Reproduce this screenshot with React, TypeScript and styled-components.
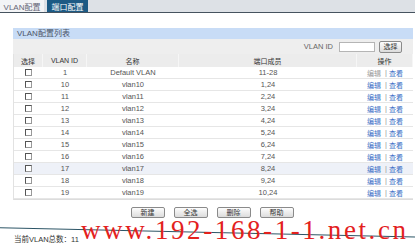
import React from 'react';
import styled, { createGlobalStyle } from 'styled-components';

const GlobalStyle = createGlobalStyle`
  html, body {
    margin: 0;
    padding: 0;
    background: #fff;
  }
  body {
    width: 415px;
    height: 248px;
    overflow: hidden;
    font-family: "Liberation Sans", "Noto Sans CJK SC", sans-serif;
    font-size: 8px;
    color: #555;
  }
`;

const Page = styled.div`
  position: relative;
  width: 415px;
  height: 248px;
  overflow: hidden;
`;

const TabBar = styled.div`
  display: flex;
  height: 12px;
  background: #dde1e6;
  border-bottom: 1px solid #46535f;
`;

const Tab = styled.div<{ $active?: boolean }>`
  display: flex;
  align-items: center;
  justify-content: center;
  width: ${({ $active }) => ($active ? 44 : 41)}px;
  margin-right: 3px;
  background: ${({ $active }) => ($active ? '#f3f4f6' : '#1c5a84')};
  color: ${({ $active }) => ($active ? '#667' : '#fff')};
  font-size: 8px;
`;

const Content = styled.div`
  padding: 15px 2px 0 13px;
`;

const PanelTitle = styled.div`
  height: 11px;
  line-height: 11px;
  padding-left: 4px;
  background: #c8dcf6;
  color: #4a5568;
`;

const FilterRow = styled.div`
  display: flex;
  align-items: center;
  justify-content: flex-end;
  height: 15px;
  padding-right: 11px;
  background: #eeeeee;
  color: #666;
`;

const FilterLabel = styled.span`
  margin-right: 6px;
  font-size: 7.5px;
`;

const TextBox = styled.div`
  box-sizing: border-box;
  width: 36px;
  height: 10px;
  border: 1px solid #b5b5b5;
  background: #fff;
  margin-right: 4px;
`;

const Button = styled.button<{ $w?: number; $h?: number }>`
  box-sizing: border-box;
  width: ${({ $w }) => $w ?? 34}px;
  height: ${({ $h }) => $h ?? 11}px;
  padding: 0;
  border: 1px solid #8a8a8a;
  border-radius: 2px;
  background: linear-gradient(#fdfdfd, #dcdcdc);
  font-family: "Noto Sans CJK SC", sans-serif;
  font-size: 7px;
  line-height: 1;
  color: #333;
`;

const Table = styled.div`
  display: grid;
  grid-template-columns: 29px 44px 92px 178px 1fr;
  border-left: 1px solid #e2e2e2;
  border-bottom: 1px solid #dcdcdc;
`;

const HeadCell = styled.div`
  display: flex;
  align-items: center;
  justify-content: center;
  height: 13px;
  background: #ececec;
  color: #333;
  font-family: "Noto Sans CJK SC", sans-serif;
  font-size: 7px;
  border-right: 1px solid #f6f6f6;
  &:nth-child(2) {
    font-family: "Liberation Sans", sans-serif;
  }
`;

const Cell = styled.div<{ $hl?: boolean }>`
  box-sizing: border-box;
  display: flex;
  align-items: center;
  justify-content: center;
  height: 12px;
  border-bottom: 1px solid #e6e6e6;
  background: ${({ $hl }) => ($hl ? '#eef1f8' : '#fff')};
  color: #555;
  font-size: 7.5px;
`;

const Check = styled.span`
  box-sizing: border-box;
  width: 7px;
  height: 7px;
  border: 1px solid #999;
  border-top-color: #555;
  border-left-color: #555;
  background: #fff;
`;

const Action = styled.span<{ $off?: boolean }>`
  color: ${({ $off }) => ($off ? '#9a9a9a' : '#3b6fc6')};
  font-family: "Noto Sans CJK SC", sans-serif;
  font-size: 7px;
`;

const Pipe = styled.span`
  margin: 0 2px 0 4px;
  color: #999;
`;

const ButtonRow = styled.div`
  display: flex;
  justify-content: center;
  gap: 9px;
  margin-top: 7px;
  padding-right: 2px;
`;

const Rule = styled.div`
  width: 430px;
  height: 1px;
  margin: 9px 0 0 -6px;
  background: #2c5566;
  transform: rotate(1.3deg);
  transform-origin: left center;
`;

const Status = styled.div`
  margin: 7px 0 0 14px;
  line-height: 10px;
  color: #333;
  font-size: 7.5px;
`;

const Watermark = styled.div`
  position: absolute;
  left: 81px;
  top: 221px;
  line-height: 19px;
  font-family: "Liberation Serif", serif;
  font-size: 27px;
  letter-spacing: 2.6px;
  color: #e3211d;
  white-space: nowrap;
  pointer-events: none;
`;

const rows = [
  { id: '1', name: 'Default VLAN', ports: '11-28' },
  { id: '10', name: 'vlan10', ports: '1,24' },
  { id: '11', name: 'vlan11', ports: '2,24' },
  { id: '12', name: 'vlan12', ports: '3,24' },
  { id: '13', name: 'vlan13', ports: '4,24' },
  { id: '14', name: 'vlan14', ports: '5,24' },
  { id: '15', name: 'vlan15', ports: '6,24' },
  { id: '16', name: 'vlan16', ports: '7,24' },
  { id: '17', name: 'vlan17', ports: '8,24' },
  { id: '18', name: 'vlan18', ports: '9,24' },
  { id: '19', name: 'vlan19', ports: '10,24' },
];

function App() {
  return (
    <Page>
      <GlobalStyle />
      <TabBar>
        <Tab $active>VLAN配置</Tab>
        <Tab>端口配置</Tab>
      </TabBar>

      <Content>
        <PanelTitle>VLAN配置列表</PanelTitle>
        <FilterRow>
          <FilterLabel>VLAN ID</FilterLabel>
          <TextBox />
          <Button $w={23} $h={12}>选择</Button>
        </FilterRow>

        <Table>
          <HeadCell>选择</HeadCell>
          <HeadCell>VLAN ID</HeadCell>
          <HeadCell>名称</HeadCell>
          <HeadCell>端口成员</HeadCell>
          <HeadCell>操作</HeadCell>
          {rows.map((r) => {
            const hl = r.id === '17';
            return (
              <React.Fragment key={r.id}>
                <Cell $hl={hl}>
                  <Check />
                </Cell>
                <Cell $hl={hl}>{r.id}</Cell>
                <Cell $hl={hl}>{r.name}</Cell>
                <Cell $hl={hl}>{r.ports}</Cell>
                <Cell $hl={hl}>
                  <Action $off={r.id === '1'}>编辑</Action>
                  <Pipe>|</Pipe>
                  <Action>查看</Action>
                </Cell>
              </React.Fragment>
            );
          })}
        </Table>

        <ButtonRow>
          <Button>新建</Button>
          <Button>全选</Button>
          <Button>删除</Button>
          <Button>帮助</Button>
        </ButtonRow>
      </Content>

      <Rule />
      <Status>当前VLAN总数：11</Status>

      <Watermark>www.192-168-1-1.net.cn</Watermark>
    </Page>
  );
}

export default App;
